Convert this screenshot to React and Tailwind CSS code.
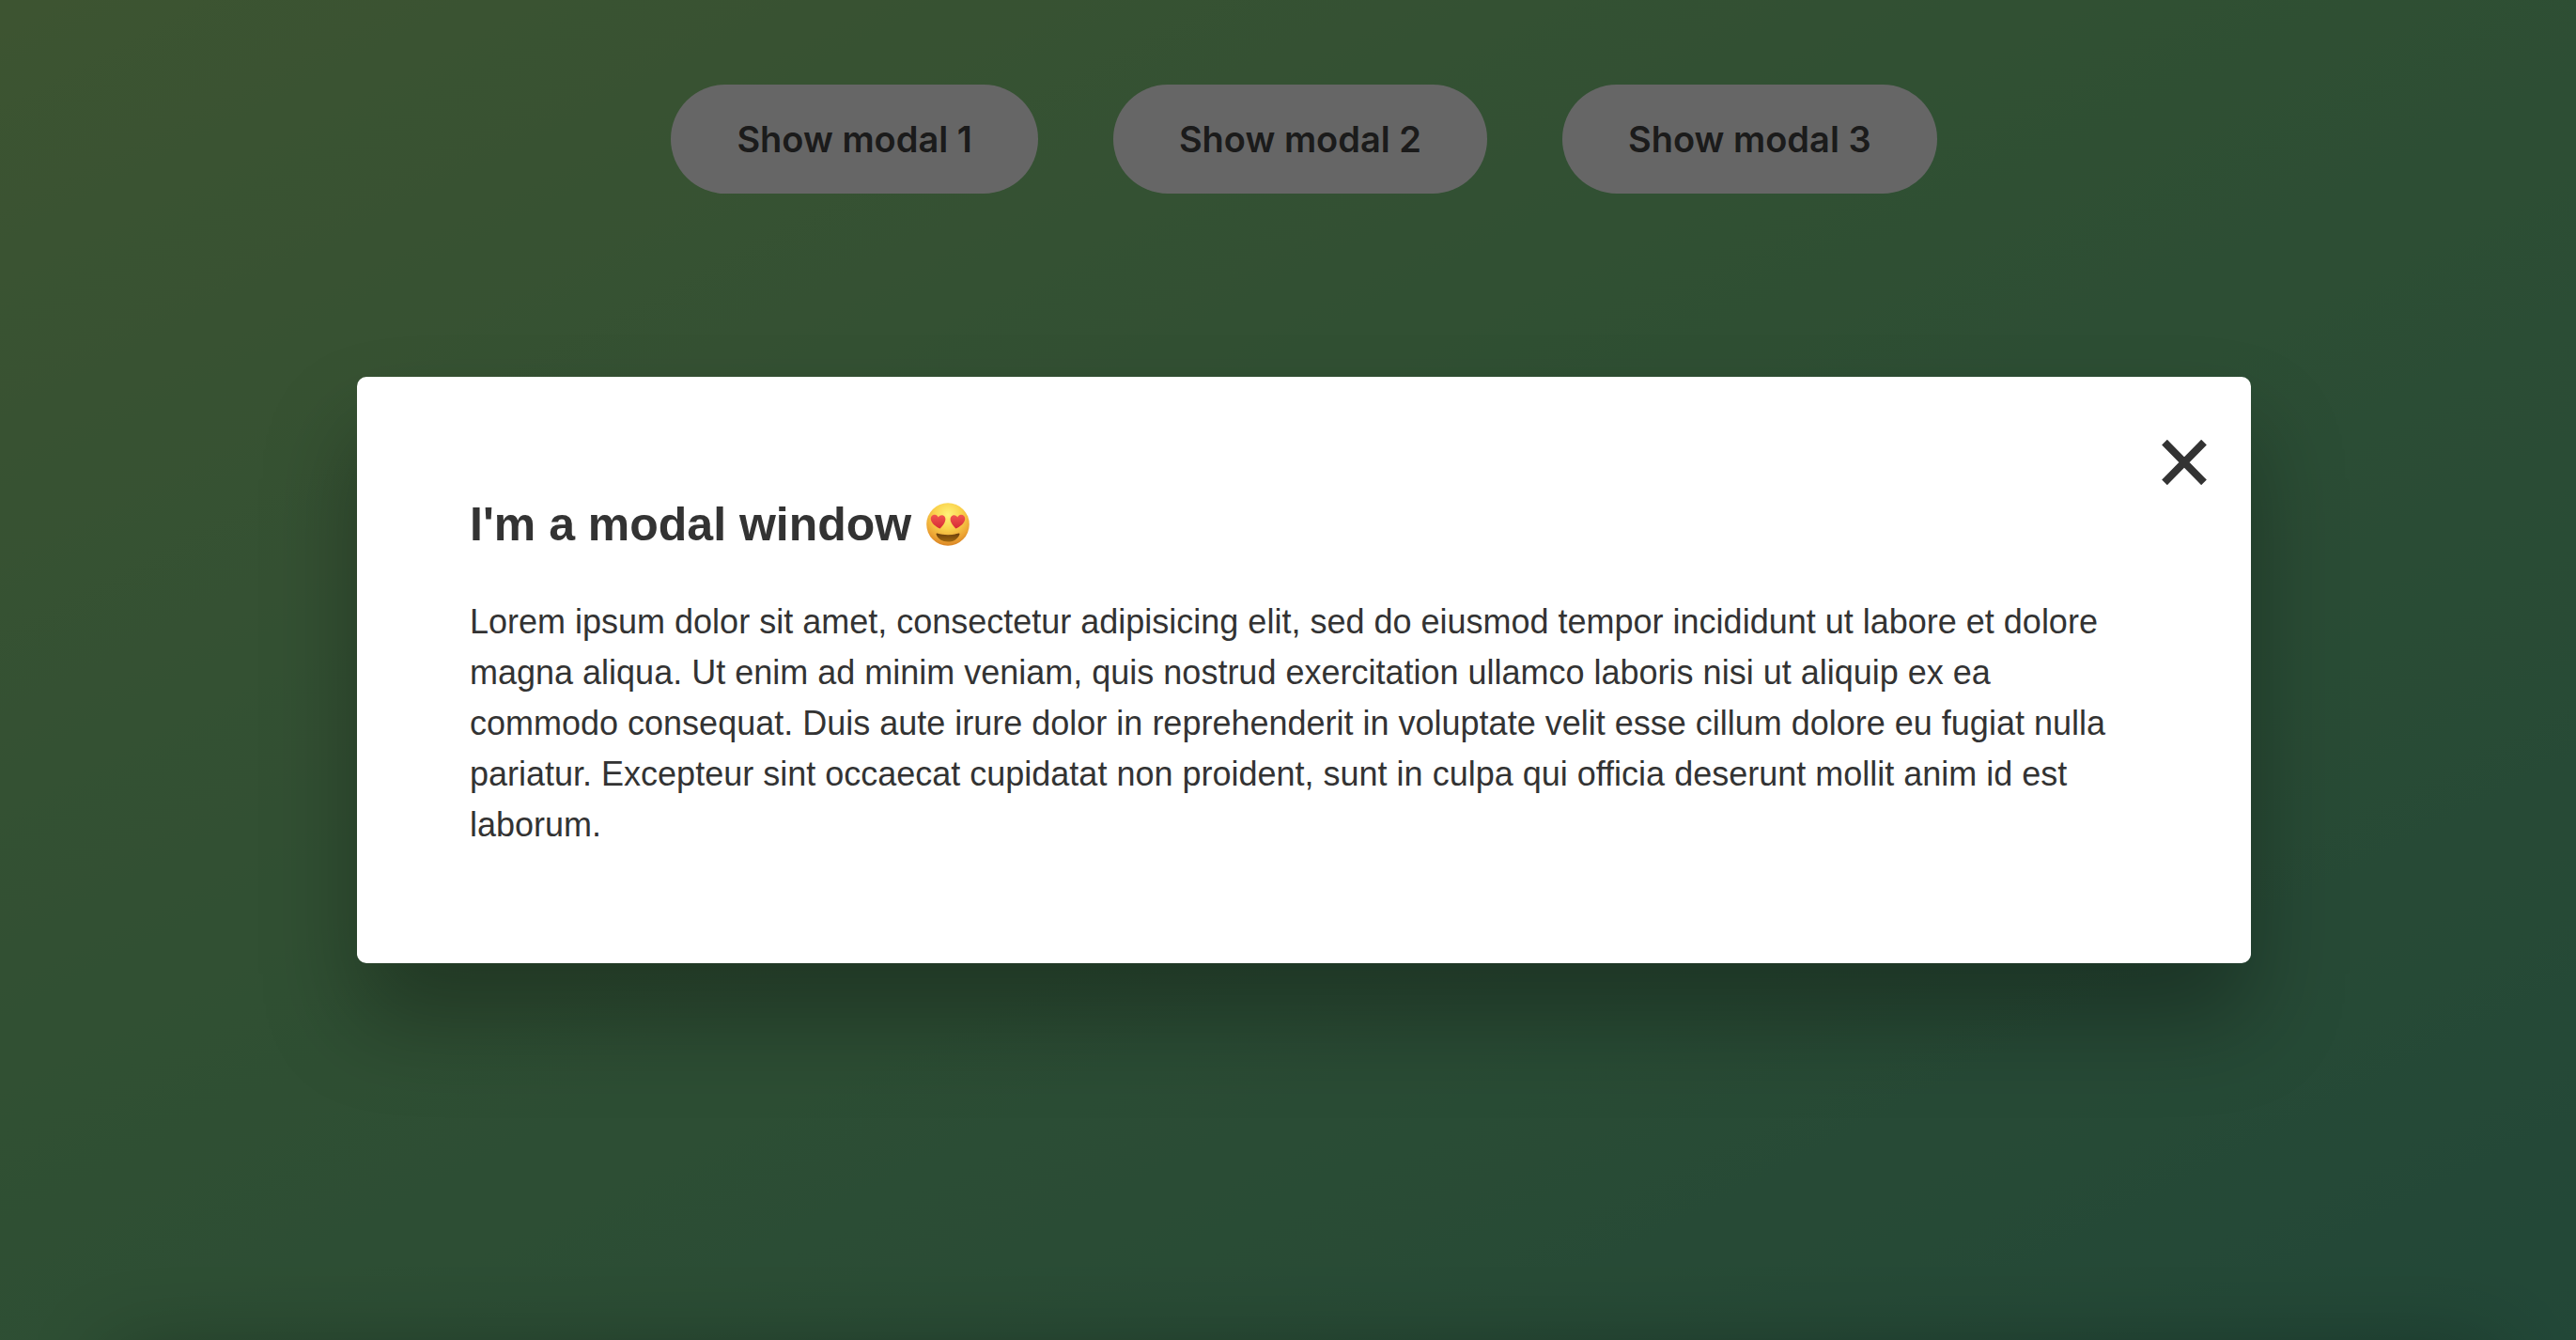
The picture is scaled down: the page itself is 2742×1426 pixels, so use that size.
const modals = [1, 2, 3];

function HeartEyes() {
  return (
    <svg role="img" aria-label="Smiling face with heart eyes" viewBox="0 0 46 46" className="size-[46px] shrink-0">
      <defs>
        <radialGradient id="face" cx="50%" cy="28%" r="72%">
          <stop offset="0" stopColor="#fff47a" />
          <stop offset="0.45" stopColor="#fad24c" />
          <stop offset="0.8" stopColor="#eda534" />
          <stop offset="1" stopColor="#d98424" />
        </radialGradient>
        <linearGradient id="heart" x1="0" y1="0" x2="0" y2="1">
          <stop offset="0" stopColor="#f2574f" />
          <stop offset="1" stopColor="#d62b34" />
        </linearGradient>
        <linearGradient id="mouth" x1="0" y1="0" x2="0" y2="1">
          <stop offset="0" stopColor="#6b3f0c" />
          <stop offset="1" stopColor="#a0680f" />
        </linearGradient>
      </defs>
      <circle cx="23" cy="23" r="22.8" fill="url(#face)" />
      <path d="M14.6 27.6C9.8 25.4 5.6 21.8 4.9 18C4.3 14.6 6.6 12.4 9.2 12.7C11 12.9 12.2 14.1 12.8 15.5C14 13.7 15.9 12.8 17.9 13.6C20.7 14.8 21.1 18.2 19.4 21.3C18.2 23.6 16.5 25.7 14.6 27.6Z" fill="url(#heart)" />
      <path d="M31.4 27.6C36.2 25.4 40.4 21.8 41.1 18C41.7 14.6 39.4 12.4 36.8 12.7C35 12.9 33.8 14.1 33.2 15.5C32 13.7 30.1 12.8 28.1 13.6C25.3 14.8 24.9 18.2 26.6 21.3C27.8 23.6 29.5 25.7 31.4 27.6Z" fill="url(#heart)" />
      <path d="M11.5 32.5C18.5 34.7 27.5 34.7 34.5 32.5C35.3 32.3 35.7 33 35.4 33.8C33.7 38.7 28.9 41.5 23 41.5C17.1 41.5 12.3 38.7 10.6 33.8C10.3 33 10.7 32.3 11.5 32.5Z" fill="url(#mouth)" />
    </svg>
  );
}

export default function App() {
  return (
    <div className="relative flex min-h-screen flex-col overflow-hidden bg-[linear-gradient(to_top_left,#56b28b,#76c681_54%,#99d27c)] font-['Liberation_Sans',sans-serif] text-[#333]">
      <main className="flex justify-center gap-20 pl-[34px] pt-[90px]">
        {modals.map((n) => (
          <button key={n} type="button" className="rounded-full bg-white px-[70px] py-[34px] font-['Inter',sans-serif] text-[38px] font-semibold leading-[48px] text-[#444]">
            Show modal {n}
          </button>
        ))}
      </main>
      {/* Soft shadow cast by the panel below the fold */}
      <div className="absolute left-[120px] right-[90px] top-full h-40 shadow-[0_16px_90px_rgba(0,0,0,0.3)]" />
      <div className="absolute inset-0 flex items-center justify-center bg-black/60 pl-[34px]">
        <section role="dialog" aria-modal="true" aria-labelledby="modal-title" className="relative w-3/4 max-w-[2016px] rounded-[10px] bg-white p-[120px] shadow-[0_60px_100px_rgba(0,0,0,0.3)]">
          <button type="button" aria-label="Close modal" className="absolute right-[47px] top-[67px]">
            <svg viewBox="0 0 48 48" className="size-12" aria-hidden="true">
              <path d="M3 2.600L45 45.400M45 2.600L3 45.400" fill="none" stroke="#333" strokeWidth="8" />
            </svg>
          </button>
          <h1 id="modal-title" className="mb-10 flex items-center gap-4 text-[50px] font-bold leading-[74px]">
            I'm a modal window <HeartEyes />
          </h1>
          <p className="text-[36px] leading-[54px]">
            Lorem ipsum dolor sit amet, consectetur adipisicing elit, sed do eiusmod tempor incididunt ut labore et dolore magna aliqua. Ut enim ad minim veniam, quis nostrud exercitation ullamco laboris nisi ut aliquip ex ea commodo consequat. Duis aute irure dolor in reprehenderit in voluptate velit esse cillum dolore eu fugiat nulla pariatur. Excepteur sint occaecat cupidatat non proident, sunt in culpa qui officia deserunt mollit anim id est laborum.
          </p>
        </section>
      </div>
    </div>
  );
}
